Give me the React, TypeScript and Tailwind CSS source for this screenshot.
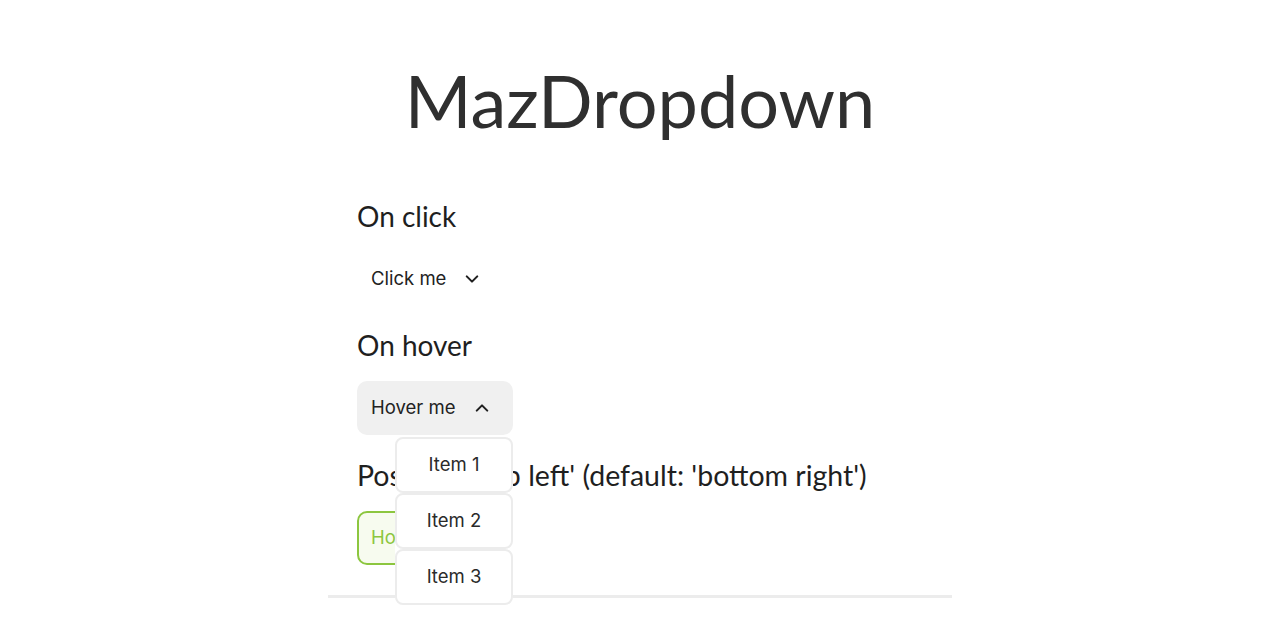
import React from "react";

const Chevron = ({ up }: { up?: boolean }) => (
  <svg width="18" height="18" viewBox="0 0 24 24" fill="none" stroke="#1f1f1f" strokeWidth="2.8" strokeLinecap="round" strokeLinejoin="round">
    {up ? <path d="M5 15.5l7-7 7 7" /> : <path d="M5 8.5l7 7 7-7" />}
  </svg>
);

export default function App() {
  return (
    <div className="w-[1280px] h-[640px] bg-white overflow-hidden flex flex-col items-center" style={{ fontFamily: "Lato, 'Noto Sans', sans-serif" }}>
      <h1 className="mt-[58px] text-[72px] leading-[84px] text-[#2f2f2f] font-normal">MazDropdown</h1>
      <div className="w-[624px] mt-[58px] flex flex-col">
        <div className="px-[29px] flex flex-col items-start">
          <h2 className="text-[28px] leading-[32px] text-[#1f1f1f]">On click</h2>
          <div className="mt-[20px] h-[54px] px-[14px] flex items-center gap-[17px] text-[18.5px] text-[#222]" style={{ fontFamily: "Inter, sans-serif" }}>
            <span>Click me</span>
            <Chevron />
          </div>
          <h2 className="mt-[23px] text-[28px] leading-[32px] text-[#1f1f1f]">On hover</h2>
          <div className="relative mt-[20px]">
            <div className="h-[54px] w-[156px] px-[14px] rounded-[10px] bg-[#f0f0f0] flex items-center gap-[18px] text-[18.5px] text-[#222]" style={{ fontFamily: "Inter, sans-serif" }}>
              <span>Hover me</span>
              <Chevron up />
            </div>
            <div className="absolute left-[38px] top-[56px] z-10 w-[118px] flex flex-col bg-white text-[18.5px] text-[#2a2a2a]" style={{ fontFamily: "Inter, sans-serif" }}>
              {["Item 1", "Item 2", "Item 3"].map((t) => (
                <div key={t} className="h-[56px] flex items-center justify-center rounded-[8px] border-2 border-[#ececec] bg-white">
                  {t}
                </div>
              ))}
            </div>
          </div>
          <h2 className="mt-[24px] text-[28.5px] leading-[32px] text-[#1f1f1f]">Position: 'top left' (default: 'bottom right')</h2>
          <div className="mt-[20px] h-[54px] px-[12px] rounded-[10px] border-2 border-[#8cc63f] bg-[#f7fbef] flex items-center gap-[16px] text-[18.5px] text-[#8cc63f]" style={{ fontFamily: "Inter, sans-serif" }}>
            <span>Hover me</span>
            <Chevron />
          </div>
        </div>
        <div className="mt-[30px] h-[3px] bg-[#ececec]" />
      </div>
    </div>
  );
}
